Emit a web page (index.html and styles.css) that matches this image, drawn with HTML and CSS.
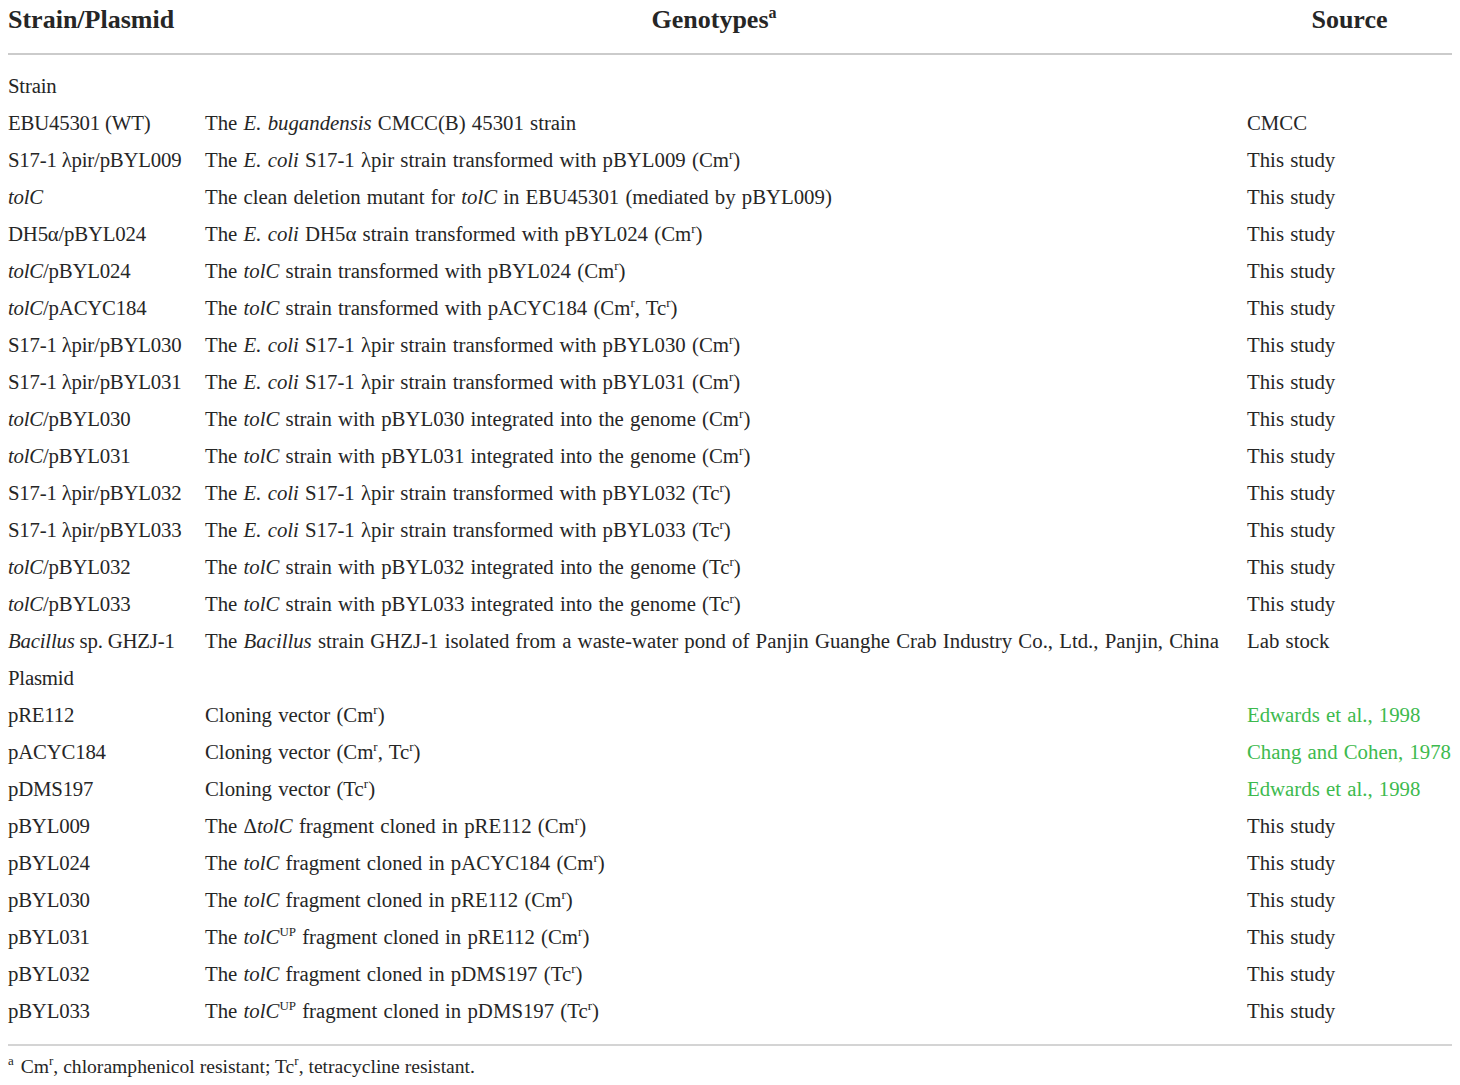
FILE: index.html
```html
<!DOCTYPE html>
<html>
<head>
<meta charset="utf-8">
<link rel="stylesheet" href="styles.css">
</head>
<body>
<table class="tbl">
<thead>
<tr><th class="c1">Strain/Plasmid</th><th class="c2">Genotypes<sup>a</sup></th><th class="c3">Source</th></tr>
</thead>
<tbody>
<tr class="first"><td>Strain</td><td></td><td></td></tr>
<tr><td>EBU45301 (WT)</td><td>The <i>E. bugandensis</i> CMCC(B) 45301 strain</td><td>CMCC</td></tr>
<tr><td>S17-1 λpir/pBYL009</td><td>The <i>E. coli</i> S17-1 λpir strain transformed with pBYL009 (Cm<sup>r</sup>)</td><td>This study</td></tr>
<tr><td><i>tolC</i></td><td>The clean deletion mutant for <i>tolC</i> in EBU45301 (mediated by pBYL009)</td><td>This study</td></tr>
<tr><td>DH5α/pBYL024</td><td>The <i>E. coli</i> DH5α strain transformed with pBYL024 (Cm<sup>r</sup>)</td><td>This study</td></tr>
<tr><td><i>tolC</i>/pBYL024</td><td>The <i>tolC</i> strain transformed with pBYL024 (Cm<sup>r</sup>)</td><td>This study</td></tr>
<tr><td><i>tolC</i>/pACYC184</td><td>The <i>tolC</i> strain transformed with pACYC184 (Cm<sup>r</sup>, Tc<sup>r</sup>)</td><td>This study</td></tr>
<tr><td>S17-1 λpir/pBYL030</td><td>The <i>E. coli</i> S17-1 λpir strain transformed with pBYL030 (Cm<sup>r</sup>)</td><td>This study</td></tr>
<tr><td>S17-1 λpir/pBYL031</td><td>The <i>E. coli</i> S17-1 λpir strain transformed with pBYL031 (Cm<sup>r</sup>)</td><td>This study</td></tr>
<tr><td><i>tolC</i>/pBYL030</td><td>The <i>tolC</i> strain with pBYL030 integrated into the genome (Cm<sup>r</sup>)</td><td>This study</td></tr>
<tr><td><i>tolC</i>/pBYL031</td><td>The <i>tolC</i> strain with pBYL031 integrated into the genome (Cm<sup>r</sup>)</td><td>This study</td></tr>
<tr><td>S17-1 λpir/pBYL032</td><td>The <i>E. coli</i> S17-1 λpir strain transformed with pBYL032 (Tc<sup>r</sup>)</td><td>This study</td></tr>
<tr><td>S17-1 λpir/pBYL033</td><td>The <i>E. coli</i> S17-1 λpir strain transformed with pBYL033 (Tc<sup>r</sup>)</td><td>This study</td></tr>
<tr><td><i>tolC</i>/pBYL032</td><td>The <i>tolC</i> strain with pBYL032 integrated into the genome (Tc<sup>r</sup>)</td><td>This study</td></tr>
<tr><td><i>tolC</i>/pBYL033</td><td>The <i>tolC</i> strain with pBYL033 integrated into the genome (Tc<sup>r</sup>)</td><td>This study</td></tr>
<tr><td><i>Bacillus</i> sp. GHZJ-1</td><td>The <i>Bacillus</i> strain GHZJ-1 isolated from a waste-water pond of Panjin Guanghe Crab Industry Co., Ltd., Panjin, China</td><td>Lab stock</td></tr>
<tr><td>Plasmid</td><td></td><td></td></tr>
<tr><td>pRE112</td><td>Cloning vector (Cm<sup>r</sup>)</td><td class="ref">Edwards et al., 1998</td></tr>
<tr><td>pACYC184</td><td>Cloning vector (Cm<sup>r</sup>, Tc<sup>r</sup>)</td><td class="ref">Chang and Cohen, 1978</td></tr>
<tr><td>pDMS197</td><td>Cloning vector (Tc<sup>r</sup>)</td><td class="ref">Edwards et al., 1998</td></tr>
<tr><td>pBYL009</td><td>The Δ<i>tolC</i> fragment cloned in pRE112 (Cm<sup>r</sup>)</td><td>This study</td></tr>
<tr><td>pBYL024</td><td>The <i>tolC</i> fragment cloned in pACYC184 (Cm<sup>r</sup>)</td><td>This study</td></tr>
<tr><td>pBYL030</td><td>The <i>tolC</i> fragment cloned in pRE112 (Cm<sup>r</sup>)</td><td>This study</td></tr>
<tr><td>pBYL031</td><td>The <i>tolC</i><sup>UP</sup> fragment cloned in pRE112 (Cm<sup>r</sup>)</td><td>This study</td></tr>
<tr><td>pBYL032</td><td>The <i>tolC</i> fragment cloned in pDMS197 (Tc<sup>r</sup>)</td><td>This study</td></tr>
<tr class="last"><td>pBYL033</td><td>The <i>tolC</i><sup>UP</sup> fragment cloned in pDMS197 (Tc<sup>r</sup>)</td><td>This study</td></tr>
</tbody>
</table>
<p class="foot"><sup>a</sup> Cm<sup>r</sup>, chloramphenicol resistant; Tc<sup>r</sup>, tetracycline resistant.</p>
</body>
</html>
```
FILE: styles.css
```css
html, body { margin: 0; padding: 0; background: #fff; }
body {
  font-family: "Liberation Serif", "DejaVu Serif", serif;
  color: #262626;
  padding: 0 8px;
  width: 1444px;
}
.tbl {
  border-collapse: collapse;
  width: 1444px;
  table-layout: fixed;
  font-size: 20.8px;
  word-spacing: 1px;
}
.tbl th {
  font-weight: bold;
  font-size: 26px;
  height: 53px;
  padding: 0;
  border-bottom: 2px solid #cbcbcb;
  vertical-align: top;
  line-height: 40px;
  word-spacing: 0;
}
.tbl th sup { font-size: 16px; vertical-align: 0; position: relative; top: -10px; line-height: 0; }
.c1 { width: 197px; text-align: left; }
.c2 { width: 1042px; text-align: center; }
.tbl th.c2 { width: 1018px; padding-right: 24px; }
.c3 { text-align: center; }
.tbl td {
  height: 37px;
  padding: 0;
  line-height: 37px;
  white-space: nowrap;
  vertical-align: middle;
}
.tbl td:first-child { word-spacing: 0; letter-spacing: -0.2px; }
.tbl tr.first td { padding-top: 12px; }
.tbl tr.last td { padding-bottom: 15px; border-bottom: 2px solid #d4d4d4; }
.tbl td sup, .foot sup { font-size: 13px; vertical-align: 0; position: relative; top: -8px; line-height: 0; }
.ref { color: #3dba4e; }
.foot {
  margin: 6px 0 0 0;
  font-size: 19.6px;
  line-height: 30px;
}
.foot > sup:first-child { margin-right: 2px; }
```
